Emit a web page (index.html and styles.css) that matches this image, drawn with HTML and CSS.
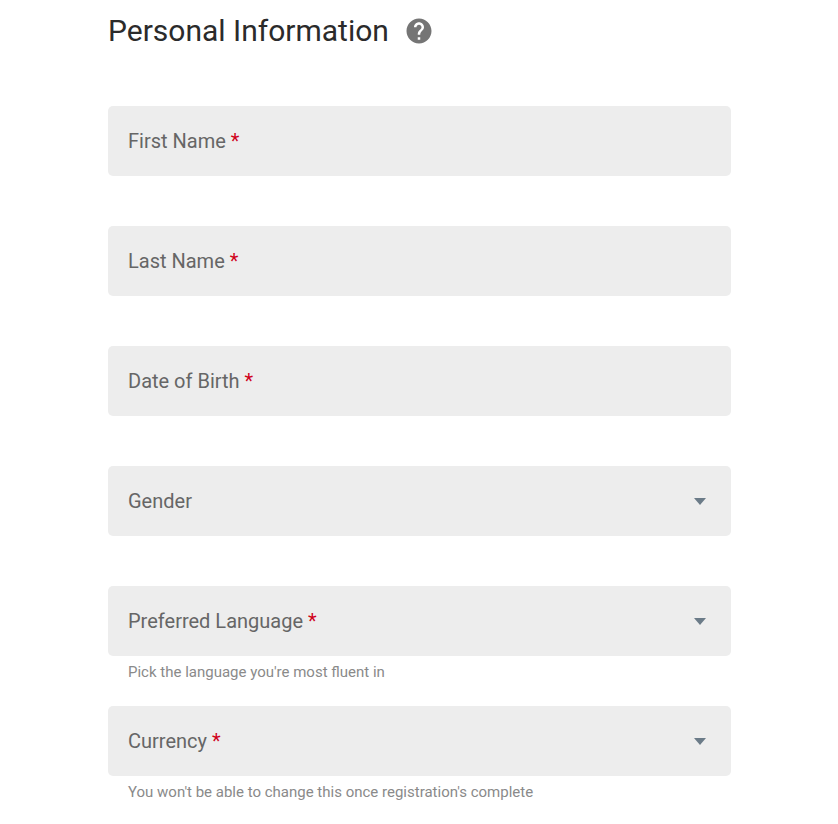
FILE: index.html
```html
<!DOCTYPE html>
<html lang="en">
<head>
<meta charset="utf-8">
<title>Personal Information</title>
<link rel="stylesheet" href="styles.css">
</head>
<body>
<main class="form">
  <header class="heading">
    <h1 class="title">Personal Information</h1>
    <svg class="help" viewBox="0 0 24 24" aria-hidden="true"><path d="M12 2C6.48 2 2 6.48 2 12s4.48 10 10 10 10-4.48 10-10S17.52 2 12 2zm1 17h-2v-2h2v2zm2.07-7.75l-.9.92C13.45 12.9 13 13.5 13 15h-2v-.5c0-1.1.45-2.1 1.17-2.83l1.24-1.26c.37-.36.59-.86.59-1.41 0-1.1-.9-2-2-2s-2 .9-2 2H8c0-2.21 1.79-4 4-4s4 1.79 4 4c0 .88-.36 1.68-.93 2.25z"/></svg>
  </header>
  <div class="field"><div class="box"><span class="label">First Name <span class="req">*</span></span></div></div>
  <div class="field"><div class="box"><span class="label">Last Name <span class="req">*</span></span></div></div>
  <div class="field"><div class="box"><span class="label">Date of Birth <span class="req">*</span></span></div></div>
  <div class="field"><div class="box"><span class="label">Gender</span><span class="arrow"></span></div></div>
  <div class="field"><div class="box"><span class="label">Preferred Language <span class="req">*</span></span><span class="arrow"></span></div><p class="hint">Pick the language you're most fluent in</p></div>
  <div class="field"><div class="box"><span class="label">Currency <span class="req">*</span></span><span class="arrow"></span></div><p class="hint">You won't be able to change this once registration's complete</p></div>
</main>
</body>
</html>
```
FILE: styles.css
```css
* { box-sizing: border-box; }
body { margin: 0; background: #fff; font-family: Roboto, sans-serif; overflow: hidden; }
.form { width: 623px; margin-left: 108px; }
.heading { display: flex; align-items: center; height: 106px; padding-bottom: 44px; }
.title { margin: 0; font-size: 30px; line-height: 40px; font-weight: 400; color: #2b2b2b; }
.help { width: 30px; height: 30px; margin-left: 15px; fill: #757575; }
.field { height: 120px; }
.box { display: flex; align-items: center; justify-content: space-between; height: 70px; padding: 0 25px 0 20px; background: #ededed; border-radius: 5px; }
.label { font-size: 20px; line-height: 24px; color: #666; }
.req { color: #d0021b; }
.arrow { width: 0; height: 0; border: 6px solid transparent; border-top: 7px solid #6b7b88; border-bottom: 0; }
.hint { margin: 6px 0 0 20px; font-size: 15px; line-height: 20px; color: #8a8a8a; }
```
